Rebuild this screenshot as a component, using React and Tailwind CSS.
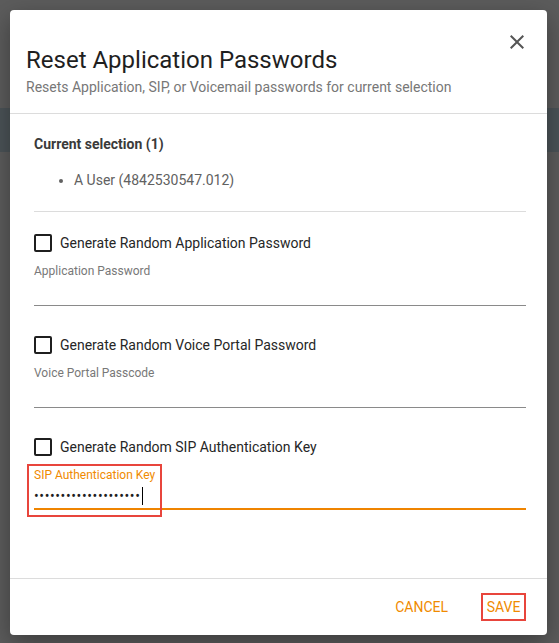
import React, { useState } from 'react';

const ORANGE = 'text-[#f08a00]';

const CheckRow = ({ label }) => {
  const [checked, setChecked] = useState(false);
  return (
    <label className="flex h-6 cursor-pointer items-center">
      <span
        onClick={() => setChecked(!checked)}
        className="flex h-[18px] w-[18px] items-center justify-center rounded-[2px] border-2 border-[#1f1f1f]"
      >
        {checked && <span className="h-2 w-2 bg-[#1f1f1f]" />}
      </span>
      <span className="ml-2 text-[14px] leading-5 text-[#262626]">{label}</span>
    </label>
  );
};

const PasswordField = ({ label }) => (
  <div className="mt-2">
    <div className="h-4 text-[12px] leading-4 text-[#787878]">{label}</div>
    <div className="h-[27px] border-b border-[#8a8a8a]" />
  </div>
);

const App = () => {
  const [dots] = useState('••••••••••••••••••••');

  return (
    <div className="relative h-[643px] w-[559px] overflow-hidden bg-[#5c5c5c] p-[10px] pr-[12px] font-[Roboto,sans-serif]">
      {/* app bar showing through the backdrop */}
      <div className="absolute left-0 right-0 top-[108px] h-[44px] bg-[#4b5357]" />

      <div className="relative flex h-[625px] flex-col rounded-[4px] bg-white shadow-[0_8px_24px_rgba(0,0,0,0.35)]">
        <div className="relative border-b border-[#dcdcdc] px-4 pb-[16px] pt-[34px]">
          <h1 className="h-8 text-[24px] leading-8 text-[#1f1f1f]">Reset Application Passwords</h1>
          <p className="mt-[1px] text-[14px] leading-5 text-[#777777]">
            Resets Application, SIP, or Voicemail passwords for current selection
          </p>
          <button className="absolute right-[18px] top-[20px] flex h-6 w-6 items-center justify-center text-[#555555]">
            <svg width="24" height="24" viewBox="0 0 24 24">
              <path d="M19 6.41L17.59 5 12 10.59 6.41 5 5 6.41 10.59 12 5 17.59 6.41 19 12 13.41 17.59 19 19 17.59 13.41 12z" fill="currentColor" />
            </svg>
          </button>
        </div>

        <div className="flex-1 pl-6 pr-[21px] pt-[20px]">
          <div className="text-[14px] font-bold leading-5 text-[#3a3a3a]">Current selection (1)</div>
          <ul className="mt-4 list-disc pl-10 text-[14px] leading-5 text-[#616161]">
            <li>A User (4842530547.012)</li>
          </ul>
          <div className="mt-[21px] border-t border-[#dcdcdc]" />

          <div className="mt-[19px]">
            <CheckRow label="Generate Random Application Password" />
            <PasswordField label="Application Password" />
          </div>

          <div className="mt-[27px]">
            <CheckRow label="Generate Random Voice Portal Password" />
            <PasswordField label="Voice Portal Passcode" />
          </div>

          <div className="mt-[27px]">
            <CheckRow label="Generate Random SIP Authentication Key" />
            <div className="relative mt-2">
              <div className={`h-4 text-[12px] leading-4 ${ORANGE}`}>SIP Authentication Key</div>
              <div className="flex h-[27px] items-center border-b-2 border-[#ef8400]">
                <span className="text-[14px] leading-5 tracking-[0.6px] text-[#1f1f1f]">{dots}</span>
                <span className="ml-[2px] h-[18px] w-[1px] bg-black" />
              </div>
              <div className="pointer-events-none absolute -left-[7px] -top-[3px] h-[53px] w-[135px] border-2 border-[#e8453c]" />
            </div>
          </div>
        </div>

        <div className="flex h-[57px] items-center justify-end border-t border-[#dcdcdc] pr-[21px]">
          <button className={`mr-[33px] text-[14px] leading-5 ${ORANGE}`}>CANCEL</button>
          <button className={`flex h-[28px] w-[45px] items-center justify-center border-2 border-[#e8453c] text-[14px] leading-5 ${ORANGE}`}>
            SAVE
          </button>
        </div>
      </div>
    </div>
  );
};

export default App;
